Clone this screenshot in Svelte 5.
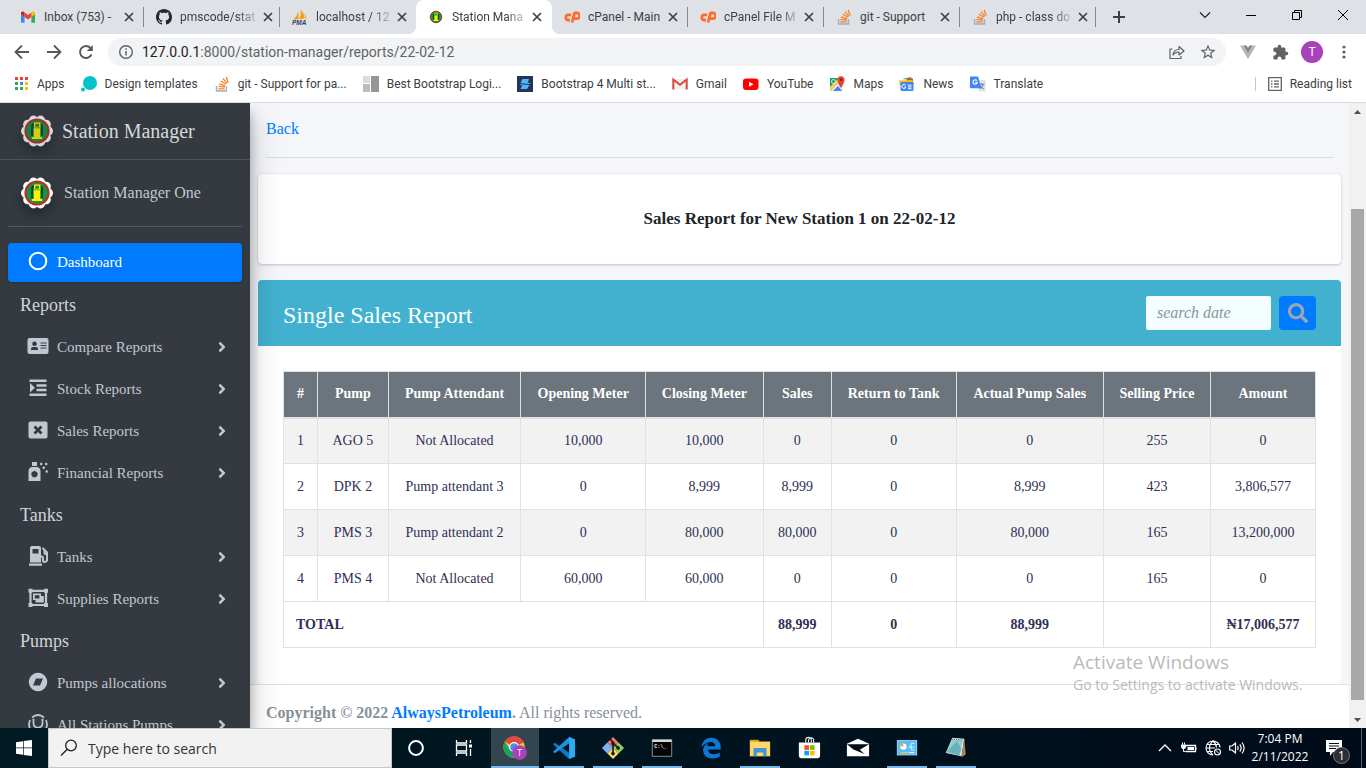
<script>
  const tabs = [
    { icon: 'gmailNew', title: 'Inbox (753) -' },
    { icon: 'github', title: 'pmscode/stat', fade: true },
    { icon: 'pma', title: 'localhost / 12', fade: true },
    { icon: 'badge', title: 'Station Mana', fade: true, active: true },
    { icon: 'cpanel', title: 'cPanel - Main' },
    { icon: 'cpanel', title: 'cPanel File M', fade: true },
    { icon: 'stack', title: 'git - Support' },
    { icon: 'stack', title: 'php - class do', fade: true }
  ];

  const bookmarks = [
    { icon: 'apps', title: 'Apps' },
    { icon: 'bubble', title: 'Design templates' },
    { icon: 'stack', title: 'git - Support for pa...' },
    { icon: 'blocks', title: 'Best Bootstrap Logi...' },
    { icon: 'bolt', title: 'Bootstrap 4 Multi st...' },
    { icon: 'gmail', title: 'Gmail' },
    { icon: 'youtube', title: 'YouTube' },
    { icon: 'maps', title: 'Maps' },
    { icon: 'news', title: 'News' },
    { icon: 'translate', title: 'Translate' }
  ];

  const menu = [
    {
      heading: 'Reports',
      items: [
        { icon: 'idCard', title: 'Compare Reports' },
        { icon: 'indent', title: 'Stock Reports' },
        { icon: 'boxX', title: 'Sales Reports' },
        { icon: 'spray', title: 'Financial Reports' }
      ]
    },
    {
      heading: 'Tanks',
      items: [
        { icon: 'pump', title: 'Tanks' },
        { icon: 'group', title: 'Supplies Reports' }
      ]
    },
    {
      heading: 'Pumps',
      items: [
        { icon: 'compass', title: 'Pumps allocations' },
        { icon: 'steth', title: 'All Stations Pumps' }
      ]
    }
  ];

  const columns = ['#', 'Pump', 'Pump Attendant', 'Opening Meter', 'Closing Meter', 'Sales', 'Return to Tank', 'Actual Pump Sales', 'Selling Price', 'Amount'];
  const rows = [
    ['1', 'AGO 5', 'Not Allocated', '10,000', '10,000', '0', '0', '0', '255', '0'],
    ['2', 'DPK 2', 'Pump attendant 3', '0', '8,999', '8,999', '0', '8,999', '423', '3,806,577'],
    ['3', 'PMS 3', 'Pump attendant 2', '0', '80,000', '80,000', '0', '80,000', '165', '13,200,000'],
    ['4', 'PMS 4', 'Not Allocated', '60,000', '60,000', '0', '0', '0', '165', '0']
  ];
  const totals = ['88,999', '0', '88,999', '', '₦17,006,577'];

  const apps = [
    { icon: 'chrome', label: 'Google Chrome', state: 'current' },
    { icon: 'vscode', label: 'Visual Studio Code', state: 'open' },
    { icon: 'gitbash', label: 'Git Bash', state: 'open' },
    { icon: 'cmd', label: 'Command Prompt', state: 'open' },
    { icon: 'edge', label: 'Edge', state: '' },
    { icon: 'folder', label: 'File Explorer', state: 'open' },
    { icon: 'store', label: 'Store', state: '' },
    { icon: 'mail', label: 'Mail', state: '' },
    { icon: 'panel', label: 'Control Panel', state: 'open' },
    { icon: 'notepad', label: 'Notepad', state: 'open' }
  ];

  const petals = Array.from({ length: 10 }, (_, i) => ({
    x: 16 + 11.4 * Math.cos((i * Math.PI) / 5),
    y: 16 + 11.4 * Math.sin((i * Math.PI) / 5)
  }));
</script>

{#snippet badge()}
  <svg class="fill" viewBox="0 0 32 32" aria-hidden="true">
    {#each petals as p}<circle cx={p.x} cy={p.y} r="4.6" fill="#fff" />{/each}
    <circle cx="16" cy="16" r="14" fill="#fff" />
    <circle cx="16" cy="16" r="11.6" fill="#0a9a46" stroke="#c8281f" stroke-width="2" />
    <path d="M11 21V12Q11 9.500 13.500 9M21 21V12Q21 9.500 18.500 9" fill="none" stroke="#173f25" stroke-width="2" />
    <path d="M13 7.500h6.500v5H13zM12.800 13.300h6.400V22h2v2H10.800v-2h2z" fill="#fff200" />
    <path d="M14.300 8.800h3.800v3h-3.800z" fill="#3c7c2c" />
  </svg>
{/snippet}

{#snippet icon(name)}
  {#if name === 'badge'}
    {@render badge()}
  {:else if name === 'gmailNew'}
    <svg class="fill" viewBox="0 0 16 16" aria-hidden="true"><path d="M1 13.2V5l3.600 2.700v6H1.800z" fill="#4285f4" /><path d="M15 13.200V5l-3.600 2.700v6h2.800z" fill="#34a853" /><path d="M1 5.200V4c0-1.600 1.600-2 2.700-1.200l.9.7v4.400z" fill="#c5221f" /><path d="M15 5.200V4c0-1.600-1.600-2-2.700-1.200l-.9.7v4.400z" fill="#fbbc04" /><path d="M4.600 3.500L8 6.100l3.400-2.600v4.400L8 10.500 4.600 7.900z" fill="#ea4335" /></svg>
  {:else if name === 'github'}
    <svg class="fill" viewBox="0 0 16 16" aria-hidden="true"><path fill="#24292f" d="M8 0C3.58 0 0 3.58 0 8c0 3.54 2.29 6.53 5.47 7.59.4.07.55-.17.55-.38 0-.19-.01-.82-.01-1.49-2.01.37-2.53-.49-2.69-.94-.09-.23-.48-.94-.82-1.13-.28-.15-.68-.52-.01-.53.63-.01 1.08.58 1.23.82.72 1.21 1.87.87 2.33.66.07-.52.28-.87.51-1.07-1.78-.2-3.64-.89-3.64-3.95 0-.87.31-1.59.82-2.15-.08-.2-.36-1.02.08-2.12 0 0 .67-.21 2.2.82.64-.18 1.32-.27 2-.27.68 0 1.36.09 2 .27 1.53-1.04 2.2-.82 2.2-.82.44 1.1.16 1.92.08 2.12.51.56.82 1.27.82 2.15 0 3.07-1.87 3.75-3.65 3.95.29.25.54.73.54 1.48 0 1.07-.01 1.93-.01 2.2 0 .21.15.46.55.38A8.01 8.01 0 0016 8c0-4.42-3.58-8-8-8z" /></svg>
  {:else if name === 'pma'}
    <svg class="fill" viewBox="0 0 16 16" aria-hidden="true"><path d="M1.500 10.500Q5 7 6.500 2.500V10zM7 10Q9.500 6 8.500 .5 12 4 12.500 9.500z" fill="#f89c0e" /><path d="M12.800 10Q12.500 6 11.500 4 14.500 6 15 10z" fill="#fbb956" /><text x="0" y="16" font-size="6.500" font-weight="bold" font-style="italic" font-family="Liberation Sans, sans-serif" fill="#353a6a">PMA</text></svg>
  {:else if name === 'cpanel'}
    <svg class="fill" viewBox="0 0 16 16" aria-hidden="true"><path d="M7 5.800H4.400a2.500 2.500 0 0 0 0 5.200H6M8 13.500L10.500 4h2.300a2.700 2.700 0 0 1 0 5.600H10.300" fill="none" stroke="#ff6c2c" stroke-width="2.800" stroke-linejoin="round" /></svg>
  {:else if name === 'stack'}
    <svg class="fill" viewBox="0 0 16 16" aria-hidden="true"><path d="M2.500 10v5h10v-5" fill="none" stroke="#a9adb1" stroke-width="1.400" /><path d="M4.300 12.800h6.400M4.500 10.400l6.300.8M5.200 7.800l6 2M6.800 5l5.300 3.300M9 2.700l4 4.700M12.200 1l2 5.600" stroke="#f48024" stroke-width="1.300" /></svg>
  {:else if name === 'apps'}
    <svg class="fill" viewBox="0 0 16 16" aria-hidden="true"><path d="M2 1h3v3H2zM7 1h3v3H7zM12 1h3v3h-3z" fill="#ea4335" /><path d="M2 6h3v3H2zM2 11h3v3H2zM7 11h3v3H7z" fill="#34a853" /><path d="M7 6h3v3H7z" fill="#4285f4" /><path d="M12 6h3v3h-3zM12 11h3v3h-3z" fill="#fbbc04" /></svg>
  {:else if name === 'bubble'}
    <svg class="fill" viewBox="0 0 16 16" aria-hidden="true"><circle cx="9" cy="7" r="7" fill="#00c4c9" /><circle cx="2" cy="13.500" r="2" fill="#00c4c9" /></svg>
  {:else if name === 'blocks'}
    <svg class="fill" viewBox="0 0 16 16" aria-hidden="true"><path d="M0 0h7v7H0z" fill="#dcdcdc" /><path d="M0 8h7v8H0z" fill="#bcbcbc" /><path d="M8 0h8v16H8z" fill="#969696" /></svg>
  {:else if name === 'bolt'}
    <svg class="fill" viewBox="0 0 16 16" aria-hidden="true"><path d="M0 0h16v16H0z" fill="#26335a" /><path d="M5.500 3H12L10.500 7H3.500zM5.500 9h7l-2.500 4H3.500z" fill="#4db8f5" /><path d="M2.500 8.800L7 5.500l6.500 1.800L9 10.800z" fill="#4db8f5" /><path d="M3.500 7.800l9 .7" stroke="#26335a" /></svg>
  {:else if name === 'gmail'}
    <svg class="fill" viewBox="0 0 16 16" aria-hidden="true"><path d="M1 3h14v10.500H1z" fill="#f1f0ef" /><path d="M1.300 13.500V3.500L8 8.800l6.700-5.300v10" fill="none" stroke="#d84b3f" stroke-width="2" /></svg>
  {:else if name === 'youtube'}
    <svg class="fill" viewBox="0 0 16 16" aria-hidden="true"><rect x="0" y="2.500" width="15.500" height="11.500" rx="3" fill="#f00" /><path d="M6 5.800v5l4.500-2.500z" fill="#fff" /></svg>
  {:else if name === 'maps'}
    <svg class="fill" viewBox="0 0 16 16" aria-hidden="true"><path d="M1 2h12v13H1z" fill="#1ea362" /><path d="M1 15L12 4l2 9v2z" fill="#e8e9ea" /><path d="M4 15l5-5 4 5z" fill="#4a80f5" /><path d="M1 11v4l12-12V2h-3z" fill="#ffd04b" /><circle cx="4.500" cy="5.500" r="2" fill="none" stroke="#d2eddf" /><path d="M12 12Q8.500 7 8.500 3.800a3.500 3.500 0 0 1 7 0Q15.500 7 12 12z" fill="#e04536" /><circle cx="12" cy="3.800" r="1.200" fill="#7c1f18" /></svg>
  {:else if name === 'news'}
    <svg class="fill" viewBox="0 0 16 16" aria-hidden="true"><path d="M3 3l9-2 1 3z" fill="#34a853" /><path d="M8 2.500h6v4H8z" fill="#ea4335" /><path d="M0 4.500l13-.5 2 3-1 3H1z" fill="#fbbc04" /><rect x="1.500" y="6" width="13" height="9" rx="1" fill="#4285f4" /><path d="M6.500 9.300a2 2 0 1 0 .3 1.700H5.200M9 9.200h3.500M9 11h3.500M9 12.700h3.500" fill="none" stroke="#fff" stroke-width="1" /></svg>
  {:else if name === 'translate'}
    <svg class="fill" viewBox="0 0 16 16" aria-hidden="true"><path d="M6 4h9.500v11.500H9z" fill="#dfe2e6" /><path d="M9.500 8.300h5M12 7v1.300M13.500 8.300q-1 3-3.500 4.500M10.500 9.500q1 2.500 3.500 3.500" fill="none" stroke="#7b8794" /><path d="M0 .5h8l3.500 11.700H1.500Q0 12.200 0 11z" fill="#4285f4" /><path d="M7 4.800a2.200 2.200 0 1 0 .3 1.800H5.200" fill="none" stroke="#fff" stroke-width="1.100" /></svg>
  {:else if name === 'idCard'}
    <svg class="fill" viewBox="0 0 22 20" aria-hidden="true"><path fill-rule="evenodd" d="M2.500 2h17Q21.500 2 21.500 4v12q0 2-2 2h-17q-2 0-2-2V4q0-2 2-2zM7.500 5.500a2.300 2.300 0 1 0 .01 0zM4 14h7v-1q0-2-2-2H6q-2 0-2 2zM13.500 6.500v1h6v-1zM13.500 9v1h6V9zM13.500 11.500v1h6v-1z" fill="currentColor" /></svg>
  {:else if name === 'indent'}
    <svg class="fill" viewBox="0 0 22 20" aria-hidden="true"><path d="M2.500 1.500h17v2.500h-17zM9.500 6.200h10v2.500h-10zM9.500 10.800h10v2.500h-10zM2.500 15.500h17V18h-17zM3 5l5 4.700-5 4.800z" fill="currentColor" /></svg>
  {:else if name === 'boxX'}
    <svg class="fill" viewBox="0 0 22 20" aria-hidden="true"><rect x="1.500" y="1.500" width="19" height="17" rx="2" fill="currentColor" /><path d="M7.500 6.500l7 7M14.500 6.500l-7 7" stroke="#343a40" stroke-width="2.800" /></svg>
  {:else if name === 'spray'}
    <svg class="fill" viewBox="0 0 22 20" aria-hidden="true"><path fill-rule="evenodd" d="M5 0h5v4H5zM4.500 5h6q3 1 3 4v10h-12V9q0-3 3-4zM7.500 9a3.200 3.200 0 1 0 .01 0z" fill="currentColor" /><path d="M13 2h2.400M18 2h2.400M15.500 5.800h2.400M18.500 9.500h2.400M14.200 .8v2.400M19.200 .8v2.400M16.700 4.600v2.400M19.700 8.300v2.400" stroke="currentColor" stroke-width="1.500" /></svg>
  {:else if name === 'pump'}
    <svg class="fill" viewBox="0 0 22 20" aria-hidden="true"><path fill-rule="evenodd" d="M5 0h7q2 0 2 2v14.500H3V2q0-2 2-2zM5.500 3v4.500h6V3zM2 17.500h13v2.300H2z" fill="currentColor" /><path d="M14 10.500h.5q1.500 0 1.500 2v2q0 1.500 1.500 1.500T20 14.500V6.500L15.500 2M17.500 4.500v3l2.500 1" fill="none" stroke="currentColor" stroke-width="2" /></svg>
  {:else if name === 'group'}
    <svg class="fill" viewBox="0 0 22 20" aria-hidden="true"><path d="M1.500 .8h4v4h-4zM17 .8h4v4h-4zM1.500 15h4v4h-4zM17 15h4v4h-4z" fill="currentColor" /><path d="M3.500 2.800h15.500v14.200H3.500z" fill="none" stroke="currentColor" stroke-width="2.200" /><path fill-rule="evenodd" d="M6 5.500h8V8h2.800v6.500H8.500V12H6zM7.800 7.200v3.200h4.600V7.200z" fill="currentColor" /></svg>
  {:else if name === 'compass'}
    <svg class="fill" viewBox="0 0 22 20" aria-hidden="true"><path fill-rule="evenodd" d="M11 .8a9.200 9.200 0 1 0 .01 0zM9 6.500h7l-3 7H6z" fill="currentColor" /></svg>
  {:else if name === 'steth'}
    <svg class="fill" viewBox="0 0 22 20" aria-hidden="true"><path d="M5 3.500Q11-1.500 17 3.500M3 6Q.500 12 4.500 17M19 6q2.500 6-1.500 11M6.500 5.500V9q0 4.500 4.500 4.500T15.500 9V5.500M11 13.500v6M5.500 5.500h2M14.500 5.500h2" fill="none" stroke="currentColor" stroke-width="1.700" /></svg>
  {:else if name === 'chrome'}
    <svg class="fill" viewBox="0 0 26 26" aria-hidden="true"><circle cx="12" cy="12" r="11.500" fill="#f8c62c" /><path d="M12 12L2 6A11.500 11.500 0 0 1 22.300 7z" fill="#dd4b3e" /><path d="M12 7h10.300A11.500 11.500 0 0 0 2 6z" fill="#dd4b3e" /><path d="M2 6A11.500 11.500 0 0 0 11 23.500L16 15 12 17 7.500 15z" fill="#1ba260" /><circle cx="12" cy="12" r="5.400" fill="#fff" /><circle cx="12" cy="12" r="4.200" fill="#4a8bf4" /><circle cx="18" cy="18" r="8" fill="#a941bb" /><text x="18" y="21.500" text-anchor="middle" font-size="9" font-family="Open Sans, sans-serif" fill="#fff">T</text></svg>
  {:else if name === 'vscode'}
    <svg class="fill" viewBox="0 0 26 26" aria-hidden="true"><path d="M1 9l2-1.800 17 12v5L18.500 25z" fill="#0b7bc4" /><path d="M1 17l2 1.800L20 7V1L18.500 1z" fill="#1b93dd" /><path d="M18.500 1L25 3.500v19L18.500 25z" fill="#2eaaf3" /></svg>
  {:else if name === 'gitbash'}
    <svg class="fill" viewBox="0 0 26 26" aria-hidden="true"><path d="M13 1l6 6-6 6-6-6z" fill="#f4776d" /><path d="M19 7l6 6-6 6-6-6z" fill="#8fd165" /><path d="M7 7l6 6-6 6-6-6z" fill="#80b0f5" /><path d="M13 13l6 6-6 6-6-6z" fill="#fbdd63" /><path d="M9 2l4 5v12M13 8l6 5" fill="none" stroke="#211a17" stroke-width="1.800" /><circle cx="13" cy="8" r="2" fill="#211a17" /><circle cx="18.500" cy="13" r="2" fill="#211a17" /><circle cx="13" cy="19" r="2" fill="#211a17" /></svg>
  {:else if name === 'cmd'}
    <svg class="fill" viewBox="0 0 26 26" aria-hidden="true"><path d="M2.500 4h21v18h-21z" fill="#050505" stroke="#8f9497" /><path d="M2.500 4h21v2.500h-21z" fill="#d5d7d9" /><text x="4.500" y="13" font-size="5.500" font-weight="bold" font-family="Liberation Mono, monospace" fill="#eee">C:\_</text></svg>
  {:else if name === 'edge'}
    <svg class="fill" viewBox="0 0 26 26" aria-hidden="true"><path d="M2.500 12C4 4 9 2 13.500 2 20 2 23.500 7 23.500 12v2.500H10c0 6 8 6.500 12.500 3.500v4.500C13 27 4 23 4.500 14.500 5 10.500 8 8.500 10.500 7.500 9 9 9 10.500 9 11h8.500c0-6-8-6.500-15 1z" fill="#0b78d6" /></svg>
  {:else if name === 'folder'}
    <svg class="fill" viewBox="0 0 26 26" aria-hidden="true"><path d="M2 4h9l2 2h-2v4H2z" fill="#d99a0b" /><path d="M2 6h22v16H2z" fill="#fdd665" /><path d="M6 22v-9h14v9h-3.500v-4h-7v4z" fill="#3f96dc" /></svg>
  {:else if name === 'store'}
    <svg class="fill" viewBox="0 0 26 26" aria-hidden="true"><path d="M9.500 7V4.500a3 3 0 0 1 6 0V7M12.500 7V4.500a3 3 0 0 1 5.500-1V7" fill="none" stroke="#e8eaec" stroke-width="1.200" /><path d="M2 7h23v14.500q0 2.500-2.500 2.500h-18Q2 24 2 21.500z" fill="#fff" /><path d="M8 10h5v5H8z" fill="#f25022" /><path d="M14 10h5v5h-5z" fill="#7fba00" /><path d="M8 16h5v5H8z" fill="#00a4ef" /><path d="M14 16h5v5h-5z" fill="#ffb900" /></svg>
  {:else if name === 'mail'}
    <svg class="fill" viewBox="0 0 26 26" aria-hidden="true"><path d="M1 8.500L13 3l12 5.500V22H1z" fill="#fff" /><path d="M1 9h24l-10 6 5 4.500L8 14.500z" fill="#00111d" /></svg>
  {:else if name === 'panel'}
    <svg class="fill" viewBox="0 0 26 26" aria-hidden="true"><rect x="2.500" y="5" width="21" height="15.500" fill="#58bdf2" stroke="#a8dcf7" /><circle cx="9" cy="11.500" r="3.500" fill="#fff" /><path d="M9 8a3.500 3.500 0 0 0-3.500 3.500H9z" fill="#f4a52c" /><path d="M14.500 12h3V8H21M17.500 12H21M17.500 12v3H21" fill="none" stroke="#eaf7fe" /><path d="M6 18h8" stroke="#f6c356" stroke-width="1.500" /><path d="M15 18h6" stroke="#fff" /></svg>
  {:else if name === 'notepad'}
    <svg class="fill" viewBox="0 0 26 26" aria-hidden="true"><path d="M9 2l13 1-3 19-17-3.500z" fill="#dce9ea" /><path d="M22 3l1.500 17-4.500 3z" fill="#a8894f" /><path d="M9 4l11.500 1-4 16L2 18z" fill="#8fcbd3" /><path d="M3 17L14 6l5 8-2 7z" fill="#4b9aa7" opacity=".55" /><path d="M9 3.500l12 1" stroke="#55646a" stroke-width="1.400" stroke-dasharray="1 1" /></svg>
  {/if}
{/snippet}

{#snippet cross()}
  <svg width="10" height="10" viewBox="0 0 10 10" aria-hidden="true"><path d="M1 1l8 8M9 1L1 9" stroke="#3c4043" stroke-width="1.700" /></svg>
{/snippet}

<div class="screen">
  <header class="browser">
    <div class="strip">
      <nav class="tabs" aria-label="Open tabs">
        {#each tabs as tab}
          <div class="tab" class:active={tab.active}>
            <span class="ico16">{@render icon(tab.icon)}</span>
            <span class="tab-title" class:fade={tab.fade}>{tab.title}</span>
            <button class="bare" aria-label="Close tab">{@render cross()}</button>
          </div>
        {/each}
      </nav>
      <button class="bare plus" aria-label="New tab"><svg width="14" height="14" viewBox="0 0 14 14"><path d="M7 1v12M1 7h12" stroke="#3c4043" stroke-width="2" /></svg></button>
      <div class="window-buttons">
        <button class="bare" aria-label="Search tabs"><svg width="12" height="12" viewBox="0 0 12 12"><path d="M1 3.500l5 5 5-5" fill="none" stroke="#222" stroke-width="1.200" /></svg></button>
        <button class="bare" aria-label="Minimize"><svg width="10" height="12" viewBox="0 0 10 12"><path d="M0 6.500h10" stroke="#000" /></svg></button>
        <button class="bare" aria-label="Restore"><svg width="12" height="12" viewBox="0 0 12 12"><path d="M1.500 3.500h7v7h-7zM3.500 3.500v-2h7v7h-2" fill="none" stroke="#000" /></svg></button>
        <button class="bare" aria-label="Close"><svg width="12" height="12" viewBox="0 0 12 12"><path d="M1 1l10 10M11 1L1 11" stroke="#000" /></svg></button>
      </div>
    </div>

    <div class="toolbar">
      <button class="bare tool" aria-label="Back"><svg width="16" height="16" viewBox="0 0 16 16"><path d="M15 8H2M8 1.500L1.500 8 8 14.500" fill="none" stroke="#55595e" stroke-width="1.800" /></svg></button>
      <button class="bare tool" aria-label="Forward"><svg width="16" height="16" viewBox="0 0 16 16"><path d="M1 8h13M8 1.500L14.500 8 8 14.500" fill="none" stroke="#55595e" stroke-width="1.800" /></svg></button>
      <button class="bare tool" aria-label="Reload"><svg width="16" height="16" viewBox="0 0 16 16"><path d="M13.500 10.500A6 6 0 1 1 12.500 4" fill="none" stroke="#55595e" stroke-width="1.900" /><path d="M14.800 1v6h-6z" fill="#55595e" /></svg></button>
      <div class="omnibox">
        <svg width="16" height="16" viewBox="0 0 16 16" aria-hidden="true"><circle cx="8" cy="8" r="6.300" fill="none" stroke="#5f6368" stroke-width="1.400" /><path d="M8 7v4.500M8 4.300v1.500" stroke="#5f6368" stroke-width="1.500" /></svg>
        <span class="url"><b>127.0.0.1</b>:8000/station-manager/reports/22-02-12</span>
        <button class="bare" aria-label="Share"><svg width="16" height="16" viewBox="0 0 16 16"><path d="M3.500 5H1v9.500h11V12M4 11q.5-5.500 6-5.500V2.500L15 7l-5 4V8Q6 8 4 11z" fill="none" stroke="#5f6368" stroke-width="1.200" stroke-linejoin="round" /></svg></button>
        <button class="bare" aria-label="Bookmark this page"><svg width="18" height="18" viewBox="0 0 24 24"><path fill="#5f6368" d="M22 9.240l-7.190-.62L12 2 9.190 8.630 2 9.240l5.460 4.730L5.820 21 12 17.270 18.180 21l-1.630-7.030L22 9.240zM12 15.400l-3.760 2.270 1-4.280-3.320-2.880 4.380-.38L12 6.100l1.710 4.040 4.380.38-3.320 2.880 1 4.280L12 15.400z" /></svg></button>
      </div>
      <button class="bare tool" aria-label="Vue devtools"><svg width="16" height="16" viewBox="0 0 16 16"><path d="M0 1.500h3.500L8 9l4.500-7.500H16L8 15z" fill="#b4b7b9" /><path d="M3.500 1.500h3L8 4l1.500-2.500h3L8 9z" fill="#7e8387" /></svg></button>
      <button class="bare tool" aria-label="Extensions"><svg width="17" height="17" viewBox="0 0 24 24"><path fill="#5f6368" d="M20.500 11H19V7c0-1.100-.9-2-2-2h-4V3.500a2.500 2.500 0 0 0-5 0V5H4c-1.100 0-1.990.9-1.990 2v3.800H3.500c1.490 0 2.700 1.210 2.700 2.700s-1.210 2.700-2.700 2.700H2V20c0 1.100.9 2 2 2h3.800v-1.500c0-1.490 1.210-2.700 2.700-2.700s2.700 1.210 2.700 2.700V22H17c1.100 0 2-.9 2-2v-4h1.500a2.500 2.500 0 0 0 0-5z" /></svg></button>
      <button class="bare tool" aria-label="Profile"><span class="avatar">T</span></button>
      <button class="bare tool" aria-label="Menu"><svg width="4" height="14" viewBox="0 0 4 14"><circle cx="2" cy="2" r="1.600" fill="#5f6368" /><circle cx="2" cy="7" r="1.600" fill="#5f6368" /><circle cx="2" cy="12" r="1.600" fill="#5f6368" /></svg></button>
    </div>

    <nav class="bookmarks" aria-label="Bookmarks">
      {#each bookmarks as mark}
        <a href="#top"><span class="ico16">{@render icon(mark.icon)}</span>{mark.title}</a>
      {/each}
      <a class="reading" href="#top"><svg width="14" height="14" viewBox="0 0 14 14" aria-hidden="true"><path d="M.700 .700h12.600v12.600H.700z" fill="none" stroke="#5f6368" stroke-width="1.300" /><path d="M3 4.200h1.500M6 4.200h5M3 7h1.500M6 7h5M3 9.800h1.500M6 9.800h5" stroke="#5f6368" stroke-width="1.300" /></svg>Reading list</a>
    </nav>
  </header>

  <div class="page">
    <aside class="sidebar">
      <a class="brand" href="#top"><span class="logo">{@render badge()}</span>Station Manager</a>
      <div class="user"><span class="logo">{@render badge()}</span><a href="#top">Station Manager One</a></div>
      <nav class="menu" aria-label="Main">
        <a class="item selected" href="#top">
          <span class="item-icon"><svg class="fill" viewBox="0 0 22 20"><circle cx="11" cy="10" r="8.300" fill="none" stroke="currentColor" stroke-width="2" /></svg></span>
          Dashboard
        </a>
        {#each menu as section}
          <div class="heading">{section.heading}</div>
          {#each section.items as item}
            <a class="item" href="#top">
              <span class="item-icon">{@render icon(item.icon)}</span>
              <span class="item-label">{item.title}</span>
              <svg width="8" height="16" viewBox="0 0 256 512" aria-hidden="true"><path fill="currentColor" d="M224.300 273l-136 136c-9.400 9.400-24.600 9.400-33.900 0l-22.600-22.600c-9.400-9.400-9.400-24.600 0-33.900l96.400-96.400-96.400-96.400c-9.400-9.400-9.400-24.600 0-33.900L54.300 103c9.400-9.400 24.600-9.400 33.900 0l136 136c9.500 9.400 9.500 24.600.1 34z" /></svg>
            </a>
          {/each}
        {/each}
      </nav>
    </aside>

    <main class="content">
      <div class="back"><a href="#top">Back</a></div>
      <section class="card title-card"><h1>Sales Report for New Station 1 on 22-02-12</h1></section>
      <section class="card report">
        <div class="report-head">
          <h2>Single Sales Report</h2>
          <form class="search">
            <input type="text" placeholder="search date" aria-label="Search date" />
            <button type="button" aria-label="Search"><svg width="20" height="20" viewBox="0 0 512 512"><path fill="currentColor" d="M505 442.700L405.300 343c-4.500-4.500-10.600-7-17-7H372c27.600-35.300 44-79.700 44-128C416 93.100 322.900 0 208 0S0 93.100 0 208s93.100 208 208 208c48.300 0 92.700-16.400 128-44v16.300c0 6.400 2.500 12.500 7 17l99.700 99.700c9.400 9.400 24.600 9.400 33.900 0l28.300-28.300c9.400-9.400 9.400-24.600.1-34zM208 336c-70.700 0-128-57.200-128-128 0-70.700 57.200-128 128-128 70.700 0 128 57.200 128 128 0 70.700-57.200 128-128 128z" /></svg></button>
          </form>
        </div>
        <div class="report-body">
          <table>
            <thead>
              <tr>{#each columns as column}<th scope="col">{column}</th>{/each}</tr>
            </thead>
            <tbody>
              {#each rows as row}
                <tr>{#each row as cell}<td>{cell}</td>{/each}</tr>
              {/each}
            </tbody>
            <tfoot>
              <tr><th class="total" scope="row" colspan="5">TOTAL</th>{#each totals as cell}<td>{cell}</td>{/each}</tr>
            </tfoot>
          </table>
        </div>
      </section>
      <footer><strong>Copyright © 2022 <a href="#top">AlwaysPetroleum</a>.</strong> All rights reserved.</footer>
    </main>

    <div class="scrollbar" aria-hidden="true">
      <svg width="7" height="4" viewBox="0 0 7 4"><path d="M0 4l3.500-4L7 4z" fill="#505050" /></svg>
      <div class="track"><div class="thumb"></div></div>
      <svg width="7" height="4" viewBox="0 0 7 4"><path d="M0 0l3.500 4L7 0z" fill="#505050" /></svg>
    </div>

    <div class="watermark"><p class="large">Activate Windows</p><p>Go to Settings to activate Windows.</p></div>
  </div>

  <div class="taskbar">
    <button class="bare start" aria-label="Start"><svg width="16" height="16" viewBox="0 0 16 16"><path d="M0 2.200L7 1.200v6.400H0zM7.700 1.100L16 0v7.600H7.700zM0 8.300h7v6.500L0 13.800zM7.700 8.300H16V16l-8.300-1.100z" fill="#fff" /></svg></button>
    <label class="find">
      <svg width="18" height="18" viewBox="0 0 18 18" aria-hidden="true"><circle cx="11" cy="6.500" r="5.300" fill="none" stroke="#222" stroke-width="1.300" /><path d="M7.200 10.300L1 16.500" stroke="#222" stroke-width="1.300" /></svg>
      <input type="text" placeholder="Type here to search" aria-label="Type here to search" />
    </label>
    <button class="bare slot" aria-label="Cortana"><svg width="18" height="18" viewBox="0 0 18 18"><circle cx="9" cy="9" r="6.900" fill="none" stroke="#fff" stroke-width="2" /></svg></button>
    <button class="bare slot" aria-label="Task view"><svg width="18" height="18" viewBox="0 0 18 18"><path d="M1.500 1v3h10V1M1.500 17v-3h10v3M1.500 6h10v6h-10zM15.500 1v3M15.500 10v7" fill="none" stroke="#fff" stroke-width="1.300" /><path d="M14 5.500h3v3h-3z" fill="#fff" /></svg></button>
    <div class="apps">
      {#each apps as app}
        <button class="bare slot {app.state}" aria-label={app.label}><span class="ico24">{@render icon(app.icon)}</span></button>
      {/each}
    </div>
    <div class="tray">
      <svg width="16" height="16" viewBox="0 0 16 16" aria-hidden="true"><path d="M2 11l6-6 6 6" fill="none" stroke="#fff" stroke-width="1.300" /></svg>
      <svg width="16" height="16" viewBox="0 0 16 16" aria-hidden="true"><path d="M5 5.500h9.500v6H4.500M15 7.500v2" fill="none" stroke="#fff" stroke-width="1.300" /><path d="M6.500 7h6.500v3H6.500zM0 4.500h5v3L3.500 9H1.500L0 7.500z" fill="#fff" /><path d="M1.500 2.500v2M3.500 2.500v2M2.500 9v2.500h2" stroke="#fff" fill="none" /></svg>
      <svg width="16" height="16" viewBox="0 0 16 16" aria-hidden="true"><path d="M15 7.500A7 7 0 1 0 8 15M1 8h9M2 4.500h12M2 11.500h6M8 1Q4.500 4 4.500 8T8 15M8 1q3.500 3 3.500 6.500" fill="none" stroke="#fff" stroke-width="1.100" /><circle cx="12.500" cy="12" r="3" fill="#00101c" stroke="#fff" stroke-width="1.100" /><path d="M10.500 10l4 4" stroke="#fff" /></svg>
      <svg width="16" height="16" viewBox="0 0 16 16" aria-hidden="true"><path d="M.700 6h2.300l3.500-3v10L3 10H.700zM8.500 6q1.300 2 0 4M10.800 4.300q2.700 3.700 0 7.400M13 2.500q4.200 5.500 0 11" fill="none" stroke="#fff" stroke-width="1.200" /></svg>
    </div>
    <div class="clock"><span>7:04 PM</span><span>2/11/2022</span></div>
    <button class="bare note" aria-label="Notifications">
      <svg width="26" height="26" viewBox="0 0 26 26"><path d="M1 2h16v12H8l-3 4v-4H1z" fill="#fff" /><path d="M4 5.500h10M4 8h10M4 10.500h7" stroke="#00101c" stroke-width="1.100" /><circle cx="16.500" cy="17.500" r="8" fill="#2b2f35" stroke="#777c81" /><text x="16.500" y="22" text-anchor="middle" font-size="12" font-family="Open Sans, sans-serif" fill="#fff">1</text></svg>
    </button>
    <span class="peek"></span>
  </div>
</div>

<style>
  :global(body) { margin: 0; }
  .screen { display: flex; flex-direction: column; height: 100vh; overflow: hidden; font-family: "Liberation Serif", serif; }
  .screen :global(*), .screen { box-sizing: border-box; }
  a { text-decoration: none; color: inherit; }
  p, h1, h2 { margin: 0; font-weight: 400; }
  svg { display: block; flex: none; }
  .fill { width: 100%; height: 100%; }
  .bare { border: 0; background: none; padding: 0; display: flex; align-items: center; justify-content: center; flex: none; }
  .ico16 { width: 16px; height: 16px; flex: none; }
  .ico24 { width: 24px; height: 24px; flex: none; }

  .browser { flex: none; background: #fff; color: #3c4043; font: 12px Roboto, sans-serif; border-bottom: 1px solid #d9dbdf; }
  .strip { display: flex; align-items: stretch; height: 34px; background: #dee1e6; padding-left: 8px; }
  .tabs { display: flex; }
  .tab { width: 136px; display: flex; align-items: center; gap: 8px; padding: 0 10px 0 12px; position: relative; }
  .tab:not(.active)::after { content: ""; position: absolute; right: 0; top: 7px; height: 20px; width: 1px; background: #85898e; }
  .tab:nth-child(3)::after { display: none; }
  .tab.active { background: #fff; border-radius: 8px 8px 0 0; }
  .tab.active::before, .tab.active::after { content: ""; position: absolute; bottom: 0; width: 8px; height: 8px; }
  .tab.active::before { left: -8px; background: radial-gradient(circle at 0 0, #dee1e6 8px, #fff 8px); }
  .tab.active::after { right: -8px; background: radial-gradient(circle at 100% 0, #dee1e6 8px, #fff 8px); }
  .tab-title { flex: 1; white-space: nowrap; }
  .fade { mask-image: linear-gradient(90deg, #000 75%, rgba(0, 0, 0, .25)); }
  .plus { width: 46px; }
  .window-buttons { margin-left: auto; display: flex; padding-bottom: 5px; }
  .window-buttons button { width: 46px; }
  .toolbar { display: flex; align-items: center; height: 36px; padding: 0 6px; }
  .tool { width: 32px; height: 32px; }
  .omnibox { flex: 1; height: 28px; margin: 0 6px 0 6px; padding: 0 9px 0 10px; border-radius: 14px; background: #f1f3f4; display: flex; align-items: center; gap: 8px; font-size: 14px; color: #5f6368; }
  .omnibox button + button { margin-left: 6px; }
  .url { flex: 1; }
  .url b { font-weight: 400; color: #202124; }
  .avatar { width: 22px; height: 22px; border-radius: 50%; background: #a941bb; color: #fff; font: 12px/22px Roboto, sans-serif; }
  .bookmarks { display: flex; align-items: center; gap: 16px; height: 32px; padding: 0 14px 4px 13px; white-space: nowrap; }
  .bookmarks a { display: flex; align-items: center; gap: 8px; }
  .bookmarks .reading { margin-left: auto; padding-left: 12px; border-left: 1px solid #c6c9cc; }

  .page { position: relative; flex: 1; min-height: 0; display: flex; overflow: hidden; background: #f4f6f9; }
  .sidebar { position: relative; z-index: 1; flex: none; width: 250px; background: #343a40; color: #c2c7d0; box-shadow: 0 14px 28px rgba(0, 0, 0, .25), 0 10px 10px rgba(0, 0, 0, .22); }
  .logo { width: 32px; height: 32px; border-radius: 50%; box-shadow: 0 6px 12px rgba(0, 0, 0, .3); flex: none; }
  .brand { display: flex; align-items: center; gap: 9px; height: 57px; padding: 0 21px; border-bottom: 1px solid #4b545c; font-size: 20px; color: #d6d8d9; }
  .brand .logo { opacity: .8; }
  .user { display: flex; align-items: center; gap: 11px; height: 67px; margin: 0 8px 16px; padding: 0 13px; border-bottom: 1px solid #4f5962; font-size: 16px; }
  .menu { padding: 0 8px; }
  .item { display: flex; align-items: center; height: 42px; padding: 0 16px 0 19px; gap: 8px; font-size: 15px; white-space: nowrap; }
  .item.selected { height: 39px; margin-bottom: 2px; border-radius: 4px; background: #007bff; color: #fff; box-shadow: 0 1px 3px rgba(0, 0, 0, .2); }
  .item-icon { width: 22px; height: 20px; margin-bottom: 3px; flex: none; }
  .item-label { flex: 1; }
  .heading { height: 42px; padding: 0 12px; font-size: 18px; line-height: 42px; color: #d0d4db; }

  .content { flex: 1; min-width: 0; display: flex; flex-direction: column; color: #212529; font-size: 16px; }
  .back { flex: none; margin: 0 15px 16px 16px; height: 55px; padding-top: 14px; line-height: 24px; border-bottom: 1px solid #d9dbdf; color: #007bff; }
  .card { flex: none; margin: 0 8px 16px; background: #fff; border-radius: 4px; box-shadow: 0 0 1px rgba(0, 0, 0, .13), 0 1px 3px rgba(0, 0, 0, .2); }
  .title-card { height: 90px; display: grid; place-items: center; }
  h1 { font-size: 17px; font-weight: 700; }
  .report { margin-bottom: 0; box-shadow: none; }
  .report-head { display: flex; align-items: center; justify-content: space-between; height: 66px; padding: 0 25px; background: #41b1cf; border-radius: 4px 4px 0 0; color: #fff; }
  h2 { font-size: 24px; padding-top: 4px; }
  .search { display: flex; gap: 8px; }
  .search input { width: 125px; height: 34px; border: 0; border-radius: 2px; padding: 0 11px; background: #f4fdff; font: italic 16px "Liberation Serif", serif; }
  .search input::placeholder { color: #8b9699; }
  .search button { width: 37px; height: 34px; padding: 0; border: 0; border-radius: 4px; background: #007bff; color: #9da5b4; display: grid; place-items: center; }
  .report-body { padding: 25px 25px 36px; }
  table { width: 100%; border-collapse: collapse; font-size: 14px; color: #2f2f55; text-align: center; }
  th, td { height: 46px; padding: 0 12px; border: 1px solid #dee2e6; white-space: nowrap; }
  thead th { background: #6c757d; color: #fff; border-bottom-width: 2px; }
  tbody tr:nth-child(odd) { background: #f2f2f2; }
  tfoot td, tfoot th { font-weight: 700; }
  .total { text-align: left; }
  footer { flex: 1; padding: 16px; line-height: 24px; background: #fff; border-top: 1px solid #dee2e6; color: #869099; }
  footer a { color: #007bff; }

  .scrollbar { flex: none; width: 17px; padding: 7px 0 6px; display: flex; flex-direction: column; align-items: center; gap: 6px; background: #f1f1f1; }
  .track { flex: 1; width: 13px; display: flex; flex-direction: column; justify-content: flex-end; }
  .thumb { height: 83%; margin-bottom: 12px; background: #a8a8a8; }
  .watermark { position: absolute; z-index: 2; right: 57px; bottom: 33px; width: 236px; white-space: nowrap; font: 14px/20px "Open Sans", sans-serif; color: #b9babc; }
  .watermark .large { font-size: 19px; line-height: 26px; }

  .taskbar { flex: none; height: 40px; display: flex; align-items: stretch; background: linear-gradient(90deg, #001a24, #001420 50%, #000b1a); color: #fff; font-family: "Open Sans", sans-serif; }
  .start { width: 48px; }
  .find { width: 344px; display: flex; align-items: center; gap: 10px; padding: 0 11px; background: #f2f2f2; border: 1px solid #c5c8c9; }
  .find input { flex: 1; min-width: 0; border: 0; padding: 0; background: none; font: 14px "Open Sans", sans-serif; }
  .find input::placeholder { color: #333; }
  .slot { width: 48px; position: relative; }
  .apps { display: flex; gap: 1px; margin-left: 3px; }
  .slot.current { background: #33454e; }
  .open::after, .current::after { content: ""; position: absolute; left: 4px; right: 4px; bottom: 0; height: 2px; background: #76b9ed; }
  .current::after { left: 0; right: 0; }
  .tray { margin-left: auto; display: flex; align-items: center; gap: 8px; }
  .clock { display: flex; flex-direction: column; justify-content: center; align-items: center; width: 70px; font-size: 12px; line-height: 18px; }
  .note { width: 46px; padding-top: 5px; }
  .peek { width: 1px; margin: 0 4px 0 0; background: #59636d; }
</style>
